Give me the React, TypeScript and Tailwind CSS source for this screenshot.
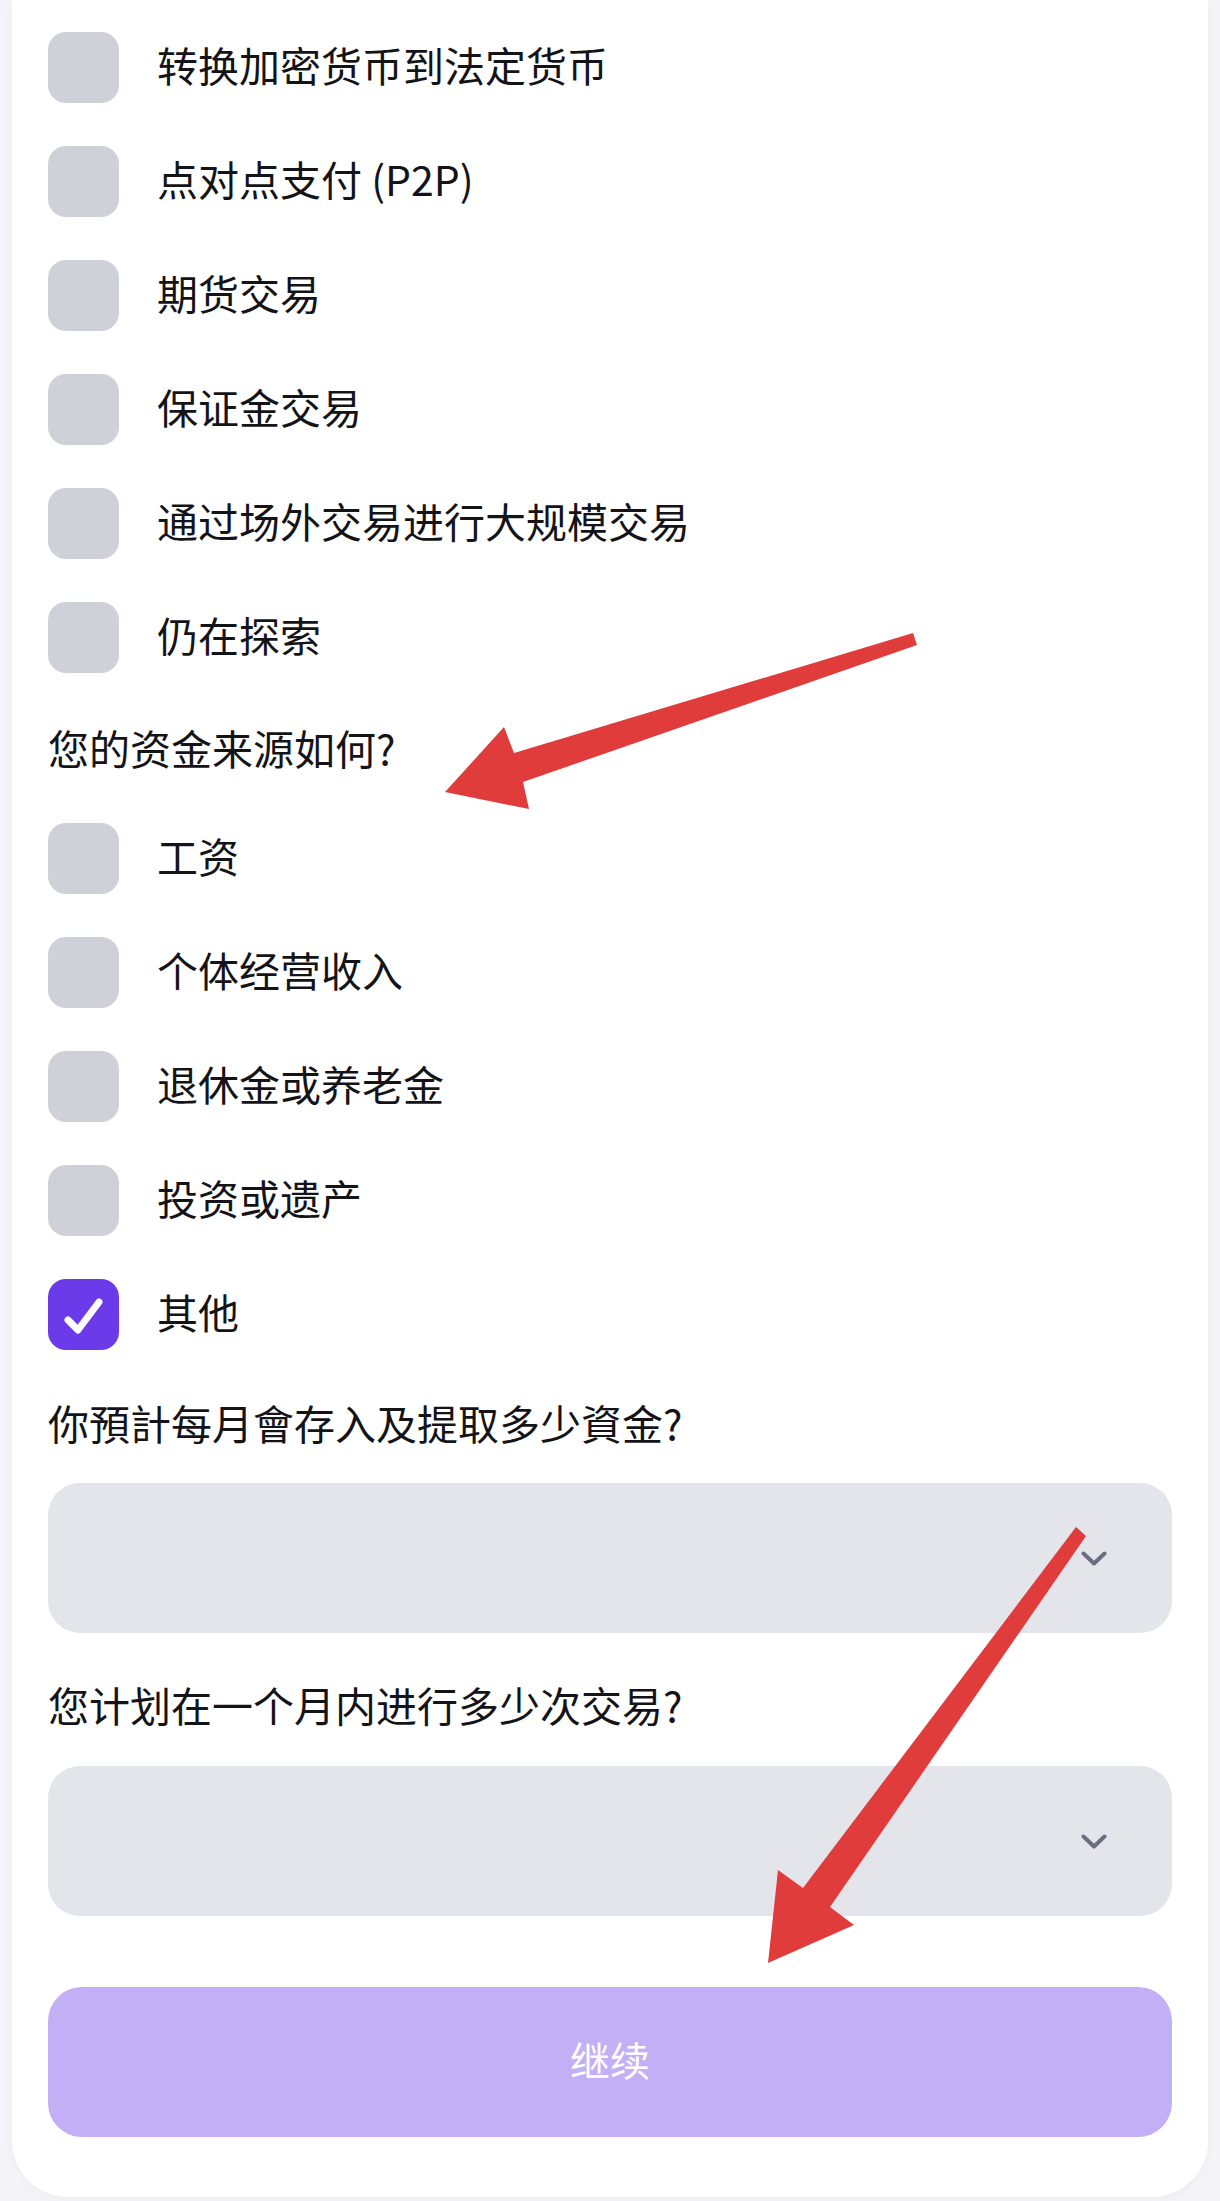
const tradeOptions = [
  "转换加密货币到法定货币",
  "点对点支付 (P2P)",
  "期货交易",
  "保证金交易",
  "通过场外交易进行大规模交易",
  "仍在探索",
];

const fundOptions = [
  { label: "工资", checked: false },
  { label: "个体经营收入", checked: false },
  { label: "退休金或养老金", checked: false },
  { label: "投资或遗产", checked: false },
  { label: "其他", checked: true },
];

function CheckRow({ label, checked = false }: { label: string; checked?: boolean }) {
  return (
    <div className="flex items-center gap-[38px]">
      <span
        className={[
          "flex h-[71px] w-[71px] shrink-0 items-center justify-center rounded-[18px]",
          checked ? "bg-[#6b3ae9]" : "bg-[#d0d1d8]",
        ].join(" ")}
      >
        {checked && (
          <svg viewBox="0 0 71 71" className="h-[71px] w-[71px]" fill="none">
            <path d="M20 41 L30 51 L51 23" stroke="white" strokeWidth="7" strokeLinecap="round" strokeLinejoin="round" />
          </svg>
        )}
      </span>
      <span className="pb-[8px] text-[41px] leading-[56px] text-[#141418]">{label}</span>
    </div>
  );
}

function SelectBox() {
  return (
    <div className="flex h-[150px] items-center justify-end rounded-[32px] bg-[#e4e5eb] pr-[65px]">
      <svg viewBox="0 0 26 15" className="h-[15px] w-[26px]" fill="none">
        <path d="M2.5 2.5 L13 12.5 L23.5 2.5" stroke="#6b6d80" strokeWidth="4" strokeLinecap="round" strokeLinejoin="round" />
      </svg>
    </div>
  );
}

export default function App() {
  return (
    <div
      className="relative min-h-screen bg-[#f4f4f9] pb-[4px]"
      style={{ fontFamily: '"Noto Sans CJK SC", "Noto Sans", sans-serif' }}
    >
      <main className="mx-[12px] flex flex-col rounded-b-[56px] bg-white px-[36px] pb-[60px] pt-[32px] shadow-[0_2px_14px_rgba(20,20,60,0.04)]">
        <div className="flex flex-col gap-[43px]">
          {tradeOptions.map((opt) => (
            <CheckRow key={opt} label={opt} />
          ))}
        </div>

        <p className="mt-[46px] pb-[3px] text-[41px] leading-[56px] text-[#141418]">您的资金来源如何?</p>

        <div className="mt-[45px] flex flex-col gap-[43px]">
          {fundOptions.map((opt) => (
            <CheckRow key={opt.label} label={opt.label} checked={opt.checked} />
          ))}
        </div>

        <section className="mt-[44px] flex flex-col gap-[30px]">
          <p className="pb-[3px] text-[41px] leading-[56px] text-[#141418]">你預計每月會存入及提取多少資金?</p>
          <SelectBox />
        </section>

        <section className="mt-[43px] flex flex-col gap-[31px]">
          <p className="pb-[3px] text-[41px] leading-[56px] text-[#141418]">您计划在一个月内进行多少次交易?</p>
          <SelectBox />
        </section>

        <button
          type="button"
          className="mt-[71px] flex h-[150px] w-full items-center justify-center rounded-[34px] bg-[#c3aff5] pb-[6px] text-[40px] text-white"
        >
          继续
        </button>
      </main>

      {/* annotation arrows drawn over the form */}
      <svg className="pointer-events-none absolute inset-0 h-full w-full" viewBox="0 0 1220 2201">
        <polygon
          points="913,633 917,645 523,782 529,809 445,792 504,727 514,753"
          fill="#e03c3c"
        />
        <polygon
          points="1076,1527 1086,1536 830,1907 854,1925 768,1963 778,1870 803,1888"
          fill="#e03c3c"
        />
      </svg>
    </div>
  );
}
